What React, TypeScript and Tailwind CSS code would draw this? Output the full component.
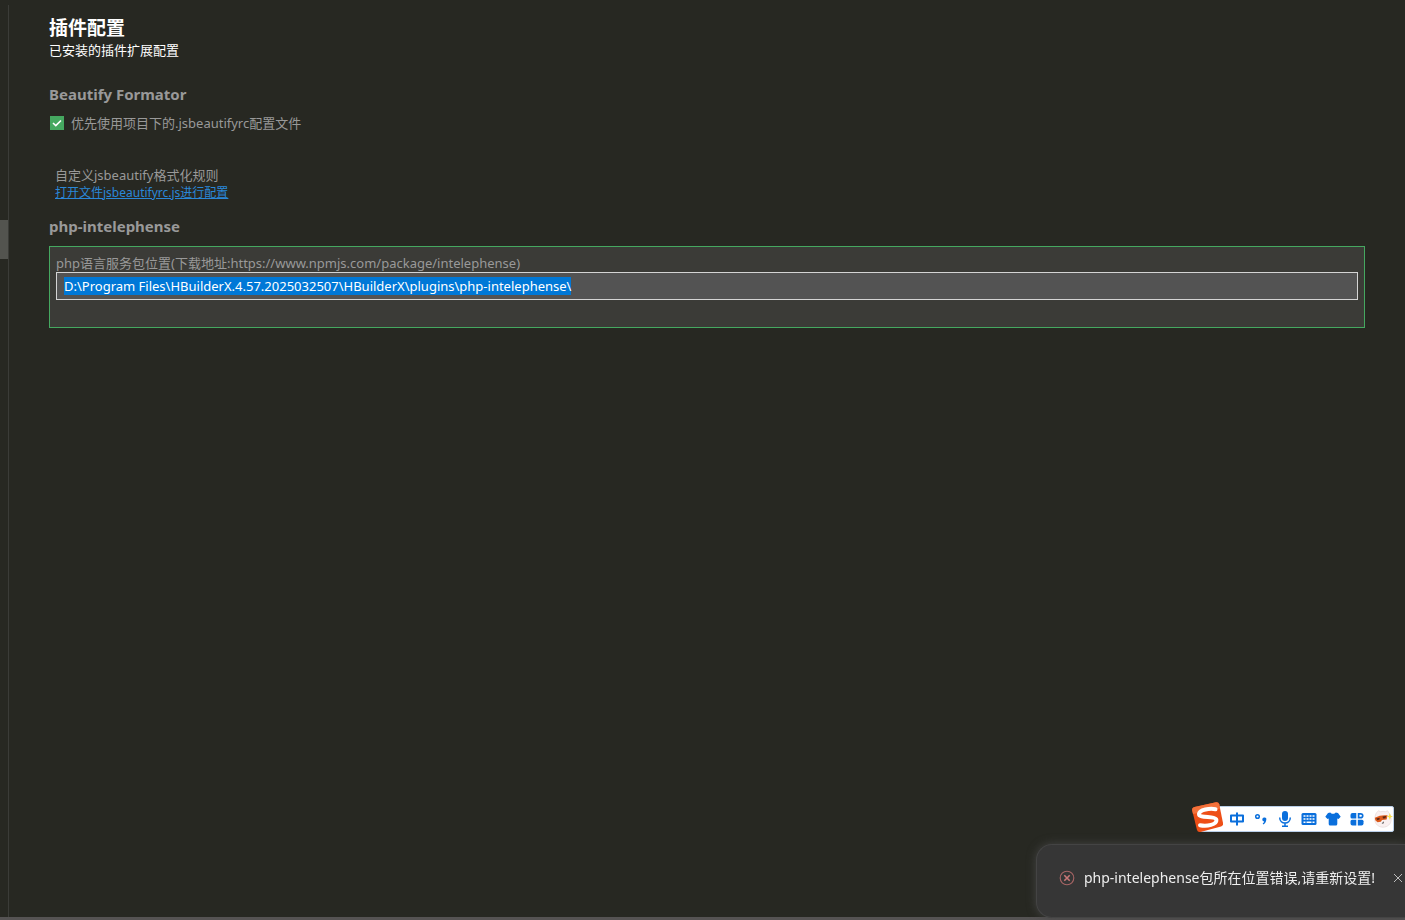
import { useEffect, useRef, useState } from "react";

const IME_BLUE = "#0a6fdc";

function SogouLogo() {
  return (
    <svg viewBox="0 0 32 32" className="h-8 w-8" aria-hidden="true">
      <path d="M3.500 6 25 1.200q2.500-.4 3.200 2L32 22q.5 2.700-2 3.400L9.500 31q-2.800.6-3.500-2L1.200 9.500Q.6 6.700 3.500 6Z" fill="#ee4f17" />
      <path d="M3.500 6 25 1.200q2.500-.4 3.200 2l.9 4.300L2 13 1.200 9.500Q.6 6.700 3.500 6Z" fill="#f4713a" />
      <path
        d="M24.500 8.200C19 7 8.300 8.600 8 13c-.2 4.600 17 1.600 17.400 6 .4 4.600-9.500 6.700-16.400 5.200"
        fill="none"
        stroke="#fff"
        strokeWidth="4"
        strokeLinecap="round"
      />
    </svg>
  );
}

function PunctuationIcon() {
  return (
    <svg viewBox="0 0 16 16" className="h-4 w-4" aria-hidden="true">
      <circle cx="4.500" cy="5.500" r="1.800" fill="none" stroke={IME_BLUE} strokeWidth="1.500" />
      <path d="M9.300 8.500a2 2 0 1 1 3.900.7c-.2 1.900-1.200 3.400-3 4.300l-.5-.9c.9-.6 1.400-1.300 1.500-2.100-1 0-1.900-.9-1.900-2Z" fill={IME_BLUE} />
    </svg>
  );
}

function MicIcon() {
  return (
    <svg viewBox="0 0 16 16" className="h-4 w-4" aria-hidden="true">
      <rect x="5" y="0" width="6" height="10" rx="3" fill={IME_BLUE} />
      <path d="M2.700 6.500c0 7.300 10.600 7.300 10.600 0M8 12v3M5 15.200h6" fill="none" stroke={IME_BLUE} strokeWidth="1.500" />
    </svg>
  );
}

function KeyboardIcon() {
  return (
    <svg viewBox="0 0 16 16" className="h-4 w-4" aria-hidden="true">
      <rect x="0.500" y="2" width="15" height="12" rx="1.500" fill={IME_BLUE} />
      <path d="M2.500 5h11M2.500 8h11" stroke="#fff" strokeWidth="1.600" strokeDasharray="2 1" />
      <path d="M2.500 11.200h2M5.500 11.200h5M11.500 11.200h2" stroke="#fff" strokeWidth="1.600" />
    </svg>
  );
}

function ShirtIcon() {
  return (
    <svg viewBox="0 0 16 16" className="h-4 w-4" aria-hidden="true">
      <path d="M5.300 1.500c.8 1.800 4.600 1.800 5.400 0l2.300.6 2.700 3.600-2.200 2.200-1.200-.5V13q0 1.500-1.500 1.500H5.200q-1.500 0-1.500-1.500V7.400l-1.200.5L.3 5.700 3 2.100Z" fill={IME_BLUE} />
    </svg>
  );
}

function ToolboxIcon() {
  return (
    <svg viewBox="0 0 16 16" className="h-4 w-4" fill={IME_BLUE} aria-hidden="true">
      <path d="M3.500 2H7.300V7.500H3A1.500 1.500 0 0 1 1.500 6V4a2 2 0 0 1 2-2Z" />
      <path d="M9.600 6.600V2.900h1.800a1.900 1.900 0 1 1 0 3.700Z" fill="none" stroke={IME_BLUE} strokeWidth="1.700" />
      <path d="M3 8.800H7.300V14.500H3.500a2 2 0 0 1-2-2V10.300A1.500 1.500 0 0 1 3 8.800Z" />
      <path d="M8.800 8.800H13a1.500 1.500 0 0 1 1.500 1.500v2.200a2 2 0 0 1-2 2H8.800Z" />
    </svg>
  );
}

function MascotIcon() {
  return (
    <svg viewBox="0 0 22 22" className="h-5 w-5" aria-hidden="true">
      <path d="M3.500 4.500 6 2l2.500 1q2.500-.8 5 0L16 2l2 3q2 3 2 6.500c0 5-4 8.500-9 8.500s-9-3.500-9-8.500q0-4 1.500-7Z" fill="#f9f0f0" stroke="#e6dada" strokeWidth="0.800" />
      <path d="M2 9.500q7-3.500 14-2.500l-1 4.500-5 .5-1.500 2-3.500.5-2.500-2Z" fill="#dc5a1b" />
      <path d="m3.500 10.500 3.500-1 .5 1.800-2.500 1.200ZM10.500 8.300l4-.5-.8 2.300-2.700.4Z" fill="#5b2513" />
      <path d="m9.500 16 2.500-2.500-.5 2.500Z" fill="#333" />
      <path d="m18.500 4.500 1 3 2.500.8-2.500.8-1 3-1-3-2.500-.8 2.500-.8Z" fill="#f7e04b" />
    </svg>
  );
}

const imeTools = [
  { name: "标点", icon: <PunctuationIcon /> },
  { name: "语音", icon: <MicIcon /> },
  { name: "键盘", icon: <KeyboardIcon /> },
  { name: "皮肤", icon: <ShirtIcon /> },
  { name: "工具箱", icon: <ToolboxIcon /> },
];

function ImeBar() {
  return (
    <div className="fixed right-[11px] bottom-[88px] flex h-[26px] items-center rounded-xs border border-[#b9cfe8] bg-white pl-7">
      <div className="absolute -top-[6px] -left-[10px]">
        <SogouLogo />
      </div>
      <button type="button" aria-label="中文" className="mr-2">
        <svg viewBox="0 0 16 16" className="h-4 w-4" fill="none" stroke={IME_BLUE} strokeWidth="2" aria-hidden="true">
          <path d="M2 4.500h12v6H2ZM8 1.500v13" strokeLinejoin="round" />
        </svg>
      </button>
      {imeTools.map((tool) => (
        <button key={tool.name} type="button" aria-label={tool.name} className="mr-2">
          {tool.icon}
        </button>
      ))}
      <button type="button" aria-label="表情">
        <MascotIcon />
      </button>
    </div>
  );
}

function Toast({ onClose }: { onClose: () => void }) {
  return (
    <div
      role="alert"
      className="fixed right-0 bottom-[2px] flex h-[74px] items-center rounded-l-2xl border border-r-0 border-[#444444] bg-[#363636] pr-[2px] pb-[6px] pl-[22px] shadow-[0_0_10px_#444444]"
    >
      <svg viewBox="0 0 16 16" className="mr-[9px] h-4 w-4" fill="none" stroke="#a86565" aria-hidden="true">
        <circle cx="8" cy="8" r="6.800" strokeWidth="1.100" />
        <path d="m5.300 5.300 5.400 5.400M10.700 5.300l-5.400 5.400" stroke="#c97878" strokeWidth="1.600" />
      </svg>
      <p className="text-[14px] leading-5 whitespace-nowrap text-[#eeeeee]">php-intelephense包所在位置错误,请重新设置!</p>
      <button type="button" aria-label="关闭" onClick={onClose} className="ml-[18px]">
        <svg viewBox="0 0 10 10" className="h-[10px] w-[10px]" stroke="#bbbbbb" aria-hidden="true">
          <path d="m1 1 8 8M9 1 1 9" />
        </svg>
      </button>
    </div>
  );
}

export default function App() {
  const [showToast, setShowToast] = useState(true);
  const [path, setPath] = useState("D:\\Program Files\\HBuilderX.4.57.2025032507\\HBuilderX\\plugins\\php-intelephense\\");
  const pathRef = useRef<HTMLInputElement>(null);

  useEffect(() => {
    pathRef.current?.focus();
    pathRef.current?.select();
  }, []);

  return (
    <div className="flex min-h-screen flex-col bg-[#272822] font-['Noto_Sans','Noto_Sans_CJK_SC',sans-serif] text-[13px] leading-[18px] text-[#999999]">
      <div className="flex flex-1">
        {/* 左侧滚动条 */}
        <div className="mt-[5px] w-[9px] border-r border-[#3b3c38] pt-[215px]">
          <div className="h-[39px] bg-[#53544f]" />
        </div>

        <main className="min-w-0 flex-1 px-10 pt-4">
          <h1 className="text-[19px] leading-[25px] font-bold text-white">插件配置</h1>
          <p className="text-white">已安装的插件扩展配置</p>

          <section className="mt-6">
            <h2 className="text-[15px] leading-[22px] font-bold">Beautify Formator</h2>
            <label className="mt-[9px] flex items-center gap-[7px]">
              <span className="relative ml-px h-[14px] w-[14px]">
                <input type="checkbox" defaultChecked className="peer block h-[14px] w-[14px] appearance-none border border-[#45a860] checked:bg-[#45a860]" />
                <svg viewBox="0 0 14 14" className="pointer-events-none absolute inset-0 hidden peer-checked:block" fill="none" stroke="#fff" strokeWidth="1.600" aria-hidden="true">
                  <path d="m3 7 2.800 2.600L11 4.500" />
                </svg>
              </span>
              优先使用项目下的.jsbeautifyrc配置文件
            </label>
            <div className="mt-[34px] pl-[6px]">
              <p>自定义jsbeautify格式化规则</p>
              <a href="#jsbeautifyrc" className="block w-fit text-[12px] text-[#2a87d8] underline">
                打开文件jsbeautifyrc.js进行配置
              </a>
            </div>
          </section>

          <section className="mt-[13px]">
            <h2 className="text-[15px] leading-[22px] font-bold">php-intelephense</h2>
            <div className="mt-[9px] h-[82px] border border-[#45a860] bg-[#3b3b37] px-[6px] pt-[7px]">
              <label htmlFor="php-path" className="block">
                php语言服务包位置(下载地址:https://www.npmjs.com/package/intelephense)
              </label>
              <input
                id="php-path"
                ref={pathRef}
                type="text"
                spellCheck={false}
                value={path}
                onChange={(e) => setPath(e.target.value)}
                className="block h-7 w-full border border-[#d4d4d4] bg-[#535353] px-[7px] text-white outline-none selection:bg-[#0078d7] selection:text-white"
              />
            </div>
          </section>
        </main>
      </div>
      <div className="h-[3px] bg-[#555353]" />

      <ImeBar />
      {showToast && <Toast onClose={() => setShowToast(false)} />}
    </div>
  );
}
